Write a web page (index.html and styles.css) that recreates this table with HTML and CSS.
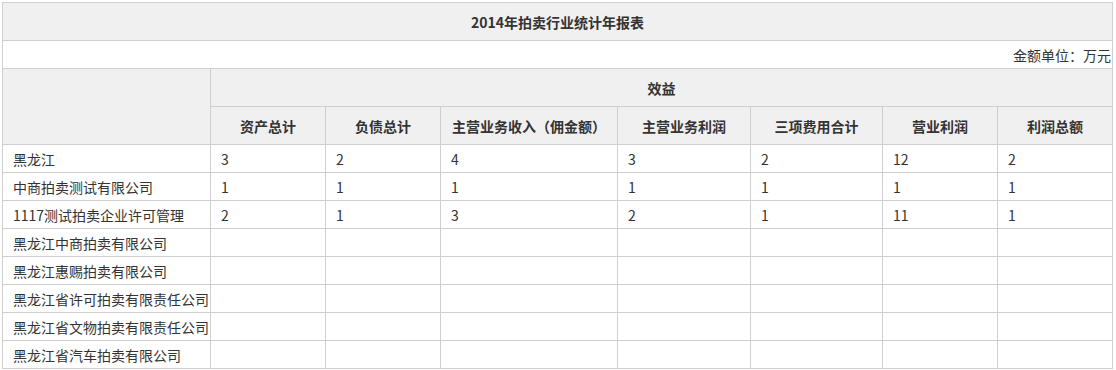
FILE: index.html
```html
<!DOCTYPE html>
<html lang="zh-CN">
<head>
<meta charset="utf-8">
<title>2014年拍卖行业统计年报表</title>
<link rel="stylesheet" href="styles.css">
</head>
<body>
<div class="wrap">
<table class="report">
  <colgroup>
    <col class="c-name">
    <col class="c-a">
    <col class="c-b">
    <col class="c-c">
    <col class="c-d">
    <col class="c-e">
    <col class="c-f">
    <col class="c-g">
  </colgroup>
  <tr class="r-title"><th colspan="8" class="title">2014年拍卖行业统计年报表</th></tr>
  <tr class="r-unit"><td colspan="8" class="unit">金额单位：万元</td></tr>
  <tr class="r-head"><th rowspan="2"></th><th colspan="7">效益</th></tr>
  <tr class="r-head">
    <th>资产总计</th><th>负债总计</th><th>主营业务收入（佣金额）</th><th>主营业务利润</th><th>三项费用合计</th><th>营业利润</th><th>利润总额</th>
  </tr>
  <tr><td>黑龙江</td><td>3</td><td>2</td><td>4</td><td>3</td><td>2</td><td>12</td><td>2</td></tr>
  <tr><td>中商拍卖测试有限公司</td><td>1</td><td>1</td><td>1</td><td>1</td><td>1</td><td>1</td><td>1</td></tr>
  <tr><td>1117测试拍卖企业许可管理</td><td>2</td><td>1</td><td>3</td><td>2</td><td>1</td><td>11</td><td>1</td></tr>
  <tr><td>黑龙江中商拍卖有限公司</td><td></td><td></td><td></td><td></td><td></td><td></td><td></td></tr>
  <tr><td>黑龙江惠赐拍卖有限公司</td><td></td><td></td><td></td><td></td><td></td><td></td><td></td></tr>
  <tr><td>黑龙江省许可拍卖有限责任公司</td><td></td><td></td><td></td><td></td><td></td><td></td><td></td></tr>
  <tr><td>黑龙江省文物拍卖有限责任公司</td><td></td><td></td><td></td><td></td><td></td><td></td><td></td></tr>
  <tr><td>黑龙江省汽车拍卖有限公司</td><td></td><td></td><td></td><td></td><td></td><td></td><td></td></tr>
</table>
</div>
</body>
</html>
```
FILE: styles.css
```css
html, body {
  margin: 0;
  padding: 0;
  background: #fff;
}
.wrap {
  padding: 2px 0 0 2px;
}
.report {
  border-collapse: collapse;
  table-layout: fixed;
  width: 1111px;
  font-family: "Noto Sans CJK SC", "Noto Sans", sans-serif;
  font-size: 14px;
  color: #333;
}
.c-name { width: 208px; }
.c-a { width: 115px; }
.c-b { width: 115px; }
.c-c { width: 177px; }
.c-d { width: 133px; }
.c-e { width: 132px; }
.c-f { width: 115px; }
.c-g { width: 115px; }
.report th, .report td {
  border: 1px solid #cfcfcf;
  padding: 0 0 0 10px;
  height: 27px;
  line-height: 16px;
  text-align: left;
  vertical-align: middle;
  white-space: nowrap;
  overflow: hidden;
}
.report th {
  background: #f0f0f0;
  font-weight: bold;
  text-align: center;
  padding: 0;
  height: 37px;
}
.report .unit {
  text-align: right;
  padding: 0 1px 0 0;
}
```
